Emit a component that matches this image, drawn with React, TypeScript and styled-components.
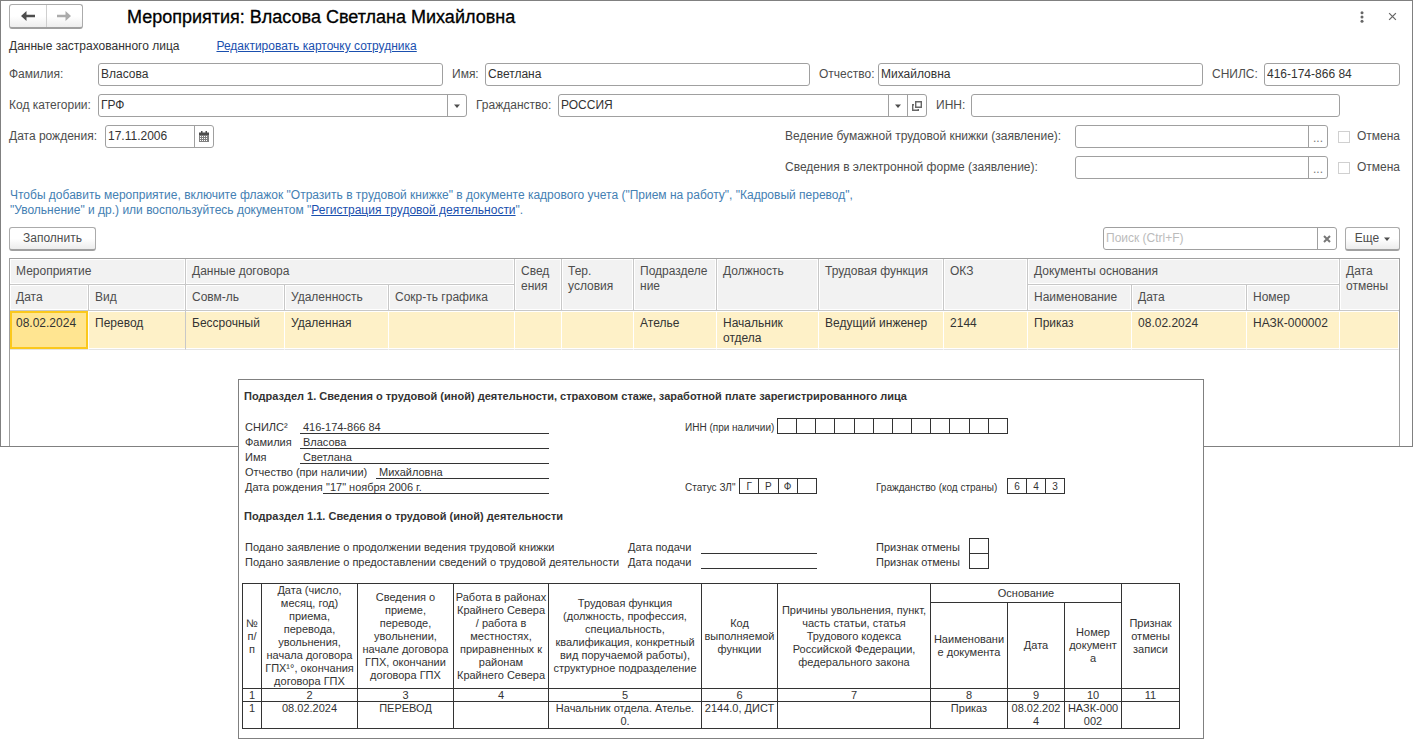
import React from "react";
import styled, { createGlobalStyle, css } from "styled-components";

const Global = createGlobalStyle`
  *, *::before, *::after { box-sizing: border-box; }
  body {
    margin: 0;
    background: #fff;
    color: #4d4d4d;
    font: 12px/15px "Liberation Sans", Arial, sans-serif;
  }
  button, input, select { font: inherit; color: inherit; }
`;

/* ---------- window ---------- */

const Window = styled.main`
  display: flex;
  flex-direction: column;
  border: 1px solid #808080;
  padding: 3px 12px 0 8px;
  background: #fff;
`;

const TitleBar = styled.header`
  display: flex;
  align-items: center;
  height: 25px;
`;

const History = styled.div`
  display: flex;
  width: 74px;
  height: 25px;
  border: 1px solid #ababab;
  border-bottom: 2px solid #a0a0a0;
  border-radius: 3px;
  background: linear-gradient(#fff 50%, #eee);
`;

const HistoryButton = styled.button<{ $muted?: boolean }>`
  flex: 1;
  display: grid;
  place-items: center;
  padding: 0;
  border: 0;
  background: none;
  color: ${(p) => (p.$muted ? "#ababab" : "#4d4d4d")};
  & + & { border-left: 1px solid #cfcfcf; }
`;

const Title = styled.h1`
  flex: 1;
  margin: 0 0 0 44px;
  font-size: 18px;
  line-height: 24px;
  font-weight: 400;
  color: #000;
  -webkit-text-stroke: 0.3px #000;
`;

const WindowTools = styled.div`
  display: flex;
  gap: 14px;
`;

const IconButton = styled.button`
  display: grid;
  place-items: center;
  width: 16px;
  height: 16px;
  padding: 0;
  border: 0;
  background: none;
  color: #666;
`;

const SubHeader = styled.div`
  display: flex;
  gap: 37px;
  padding: 10px 0 9px;
  color: #333;
`;

const Link = styled.a`
  color: #1a4fae;
`;

/* ---------- form ---------- */

const Form = styled.form`
  display: grid;
  gap: 8px;
`;

const FormRow = styled.div<{ $columns: string }>`
  display: grid;
  grid-template-columns: ${(p) => p.$columns};
  align-items: center;
`;

const Label = styled.label<{ $inner?: boolean }>`
  padding-left: ${(p) => (p.$inner ? "9px" : "0")};
  white-space: nowrap;
`;

const Box = styled.div`
  display: flex;
  height: 23px;
  min-width: 0;
  border: 1px solid #a0a0a0;
  border-radius: 3px;
  background: #fff;
  overflow: hidden;
`;

const TextInput = styled.input`
  flex: 1;
  width: 0;
  min-width: 0;
  padding: 0 2px;
  border: 0;
  outline: 0;
  background: none;
  color: #333;
  &::placeholder { color: #bbb; opacity: 1; }
`;

const Select = styled.select`
  grid-area: 1 / 1 / 2 / 3;
  appearance: none;
  padding: 0 2px;
  border: 0;
  outline: 0;
  background: none;
  color: #333;
`;

const SelectBox = styled.div`
  flex: 1;
  display: grid;
  grid-template-columns: 1fr 19px;
`;

const addOn = css`
  display: grid;
  place-items: center;
  width: 19px;
  border: 0;
  border-left: 1px solid #a0a0a0;
`;

const SelectMark = styled.span`
  ${addOn}
  grid-area: 1 / 2;
  pointer-events: none;
`;

const AddOnButton = styled.button`
  ${addOn}
  padding: 0;
  background: none;
  color: #777;
`;

const Ellipsis = styled.span`
  padding-top: 3px;
`;

const Split = styled.div`
  display: flex;
  justify-content: space-between;
  align-items: flex-start;
`;

const DateField = styled.div`
  display: grid;
  grid-template-columns: 96px 109px;
  align-items: center;
`;

const Statements = styled.div`
  display: grid;
  grid-template-columns: 290px 253px 72px;
  row-gap: 8px;
  align-items: center;
`;

const Check = styled.label`
  display: flex;
  align-items: center;
  justify-content: space-between;
  padding-left: 10px;
`;

const Checkbox = styled.input`
  appearance: none;
  width: 12px;
  height: 12px;
  margin: 0;
  border: 1px solid #d0d0d0;
  background: #fff;
`;

const Hint = styled.p`
  margin: 9px 0;
  padding-left: 1px;
  color: #4480b3;
`;

const Toolbar = styled.div`
  display: flex;
  align-items: center;
  justify-content: space-between;
  margin-bottom: 7px;
`;

const ToolGroup = styled.div`
  display: flex;
  gap: 8px;
`;

const SearchBox = styled(Box)`
  width: 234px;
`;

const Button = styled.button<{ $width: number }>`
  display: flex;
  align-items: center;
  justify-content: center;
  gap: 5px;
  width: ${(p) => p.$width}px;
  height: 24px;
  padding: 0;
  border: 1px solid #ababab;
  border-bottom: 2px solid #a0a0a0;
  border-radius: 3px;
  background: linear-gradient(#fff 50%, #ececec);
  white-space: nowrap;
`;

/* ---------- events list ---------- */

const ListFrame = styled.div`
  min-height: 188px;
  border: 1px solid #a0a0a0;
  border-bottom: 0;
`;

const List = styled.table`
  width: 100%;
  table-layout: fixed;
  border-collapse: separate;
  border-spacing: 0;
`;

const HeadCell = styled.th`
  height: 26px;
  padding: 5px 0 0 6px;
  border-right: 1px solid #c8c8c8;
  border-bottom: 1px solid #c8c8c8;
  background: #f2f2f2;
  box-shadow: inset 0 0 0 1px #fff;
  font-weight: 400;
  text-align: left;
  vertical-align: top;
  white-space: nowrap;
  &[data-last] { border-right: 0; }
`;

const DataCell = styled.td<{ $active?: boolean; $divider?: boolean }>`
  height: 39px;
  padding: 5px 0 0 6px;
  border-right: 1px solid ${(p) => (p.$divider ? "#c8c8c8" : "#fff")};
  border-bottom: 1px solid #e4e4e4;
  background: ${(p) => (p.$active ? "#ffe591" : "#fef1c8")};
  box-shadow: ${(p) => (p.$active ? "inset 0 0 0 2px #fbc81c" : "inset 0 -1px 0 #fff, inset 0 1px 0 #fff")};
  color: #333;
  vertical-align: top;
`;

/* ---------- printed form ---------- */

const Report = styled.section`
  position: relative;
  margin: -68px 209px 0 238px;
  padding: 8px 23px 9px 3px;
  border: 1px solid #808080;
  background: #fff;
  color: #333;
  font-size: 11px;
  line-height: 13px;
`;

const ReportTitle = styled.h2`
  margin: 0 0 15px;
  padding: 1px 0 0 2px;
  font-size: 11px;
  line-height: 15px;
  font-weight: 700;
  white-space: nowrap;
`;

const Lines = styled.div`
  display: grid;
  padding-left: 3px;
  margin-bottom: 14px;
`;

const Line = styled.div`
  display: grid;
  grid-template-columns: 440px 191px 1fr;
  height: 15px;
  align-items: end;
  white-space: nowrap;
`;

const StatementLine = styled(Line)`
  grid-template-columns: 383px 73px 175px 93px 20px;
`;

const Entry = styled.div<{ $label: number }>`
  display: grid;
  grid-template-columns: ${(p) => p.$label}px 1fr;
  align-items: end;
  width: 304px;
`;

const Value = styled.span`
  padding-left: 3px;
  height: 14px;
  line-height: 15px;
  border-bottom: 1px solid #333;
`;

const Blank = styled.span`
  width: 116px;
  height: 14px;
  border-bottom: 1px solid #333;
`;

const Coded = styled.div<{ $label: number }>`
  display: grid;
  grid-template-columns: ${(p) => p.$label}px max-content;
  align-items: end;
  font-size: 10px;
`;

const Cells = styled.span<{ $count: number; $width: number }>`
  display: grid;
  grid-template-columns: repeat(${(p) => p.$count}, 1fr);
  width: ${(p) => p.$width}px;
  height: 16px;
  margin-top: -1px;
  border: solid #333;
  border-width: 1px 0 1px 1px;
`;

const Cell = styled.span`
  height: 14px;
  padding-top: 1px;
  border-right: 1px solid #333;
  text-align: center;
`;

const CancelMark = styled.span`
  height: 16px;
  margin-top: -1px;
  border: 1px solid #333;
`;

const ReportTable = styled.table`
  width: 100%;
  table-layout: fixed;
  border-collapse: collapse;
  text-align: center;
  th, td {
    padding: 0;
    border: 1px solid #333;
    font-weight: 400;
    white-space: nowrap;
  }
  tbody td { vertical-align: top; }
`;

const ReportRow = styled.tr<{ $height: number }>`
  height: ${(p) => p.$height}px;
`;

const NumberRow = styled.tr`
  line-height: 12px;
`;

/* ---------- icons ---------- */

const Arrow = ({ flip }: { flip?: boolean }) => (
  <svg width="14" height="10" viewBox="0 0 14 10" aria-hidden="true">
    <g transform={flip ? "matrix(-1 0 0 1 14 0)" : undefined}>
      <path d="M0 5 5.500 0v3.8H14v2.4H5.500V10z" fill="currentColor" />
    </g>
  </svg>
);

const Caret = () => (
  <svg width="6" height="4" viewBox="0 0 6 4" aria-hidden="true">
    <path d="M0 .5h6L3 4z" fill="#4d4d4d" />
  </svg>
);

const Dots = () => (
  <svg width="4" height="12" viewBox="0 0 4 12" aria-hidden="true" fill="currentColor">
    <circle cx="2" cy="1.7" r="1.5" />
    <circle cx="2" cy="6" r="1.5" />
    <circle cx="2" cy="10.3" r="1.5" />
  </svg>
);

const Cross = ({ weight, size }: { weight: number; size: number }) => (
  <svg width={size} height={size} viewBox="0 0 8 8" aria-hidden="true">
    <path d="M1 1l6 6M7 1 1 7" stroke="currentColor" strokeWidth={weight} fill="none" />
  </svg>
);

const Calendar = () => (
  <svg width="10" height="11" viewBox="0 0 10 11" aria-hidden="true">
    <path d="M0 2.500h10V11H0z" fill="#808080" />
    <path d="M0 1.500h10V4H0z" fill="#4d4d4d" />
    <path d="M2 0h1.500v2H2zM6.500 0H8v2H6.500z" fill="#4d4d4d" />
    <path
      d="M1 5h1v1H1zM3 5h1v1H3zM5 5h1v1H5zM7 5h1v1H7zM1 7h1v1H1zM3 7h1v1H3zM5 7h1v1H5zM7 7h1v1H7zM1 9h1v1H1zM3 9h1v1H3zM5 9h1v1H5zM7 9h1v1H7z"
      fill="#fff"
    />
  </svg>
);

const OpenIcon = () => (
  <svg width="10" height="10" viewBox="0 0 10 10" aria-hidden="true" fill="none" stroke="#666" strokeWidth="1.4">
    <path d="M3.700.7h5.600v5.600H3.700z" />
    <path d="M2 3.700H.7v5.600h5.600V8" />
  </svg>
);

/* ---------- data ---------- */

const listColumns = [79, 97, 99, 104, 126, 47, 72, 83, 102, 125, 84, 104, 115, 93, 59];

const eventRow = [
  "08.02.2024", "Перевод", "Бессрочный", "Удаленная", "", "", "", "Ателье",
  "Начальник отдела", "Ведущий инженер", "2144", "Приказ", "08.02.2024", "НАЗК-000002", "",
];

const reportColumns = [19, 96, 96, 95, 153, 76, 153, 77, 57, 57, 58];

const reportHead = [
  ["№", "п/", "п"],
  ["Дата (число,", "месяц, год)", "приема,", "перевода,", "увольнения,", "начала договора", "ГПХ¹°, окончания", "договора ГПХ"],
  ["Сведения о", "приеме,", "переводе,", "увольнении,", "начале договора", "ГПХ, окончании", "договора ГПХ"],
  ["Работа в районах", "Крайнего Севера", "/ работа в", "местностях,", "приравненных к", "районам", "Крайнего Севера"],
  ["Трудовая функция", "(должность, профессия,", "специальность,", "квалификация, конкретный", "вид поручаемой работы),", "структурное подразделение"],
  ["Код", "выполняемой", "функции"],
  ["Причины увольнения, пункт,", "часть статьи, статья", "Трудового кодекса", "Российской Федерации,", "федерального закона"],
];

const reportRow = [
  ["1"], ["08.02.2024"], ["ПЕРЕВОД"], [""], ["Начальник отдела. Ателье.", "0."],
  ["2144.0, ДИСТ"], [""], ["Приказ"], ["08.02.202", "4"], ["НАЗК-000", "002"], [""],
];

const Stacked = ({ lines }: { lines: string[] }) => (
  <>
    {lines.map((line, i) => (
      <React.Fragment key={i}>
        {i > 0 && <br />}
        {line}
      </React.Fragment>
    ))}
  </>
);

const CodeCells = ({ text, count, width }: { text: string; count: number; width: number }) => (
  <Cells $count={count} $width={width}>
    {Array.from({ length: count }, (_, i) => (
      <Cell key={i}>{text[i] ?? ""}</Cell>
    ))}
  </Cells>
);

const Statement = ({ id, text }: { id: string; text: string }) => (
  <>
    <Label htmlFor={id}>{text}</Label>
    <Box>
      <TextInput id={id} />
      <AddOnButton type="button" aria-label="Выбрать"><Ellipsis>...</Ellipsis></AddOnButton>
    </Box>
    <Check>
      <Checkbox type="checkbox" />
      Отмена
    </Check>
  </>
);

export default function App() {
  return (
    <>
      <Global />
      <Window>
        <TitleBar>
          <History>
            <HistoryButton aria-label="Назад"><Arrow /></HistoryButton>
            <HistoryButton aria-label="Вперед" $muted><Arrow flip /></HistoryButton>
          </History>
          <Title>Мероприятия: Власова Светлана Михайловна</Title>
          <WindowTools>
            <IconButton aria-label="Меню"><Dots /></IconButton>
            <IconButton aria-label="Закрыть"><Cross weight={1.1} size={9} /></IconButton>
          </WindowTools>
        </TitleBar>

        <SubHeader>
          <span>Данные застрахованного лица</span>
          <Link href="#employee">Редактировать карточку сотрудника</Link>
        </SubHeader>

        <Form>
          <FormRow $columns="89px 345fr 42px 325fr 68px 325fr 61px 136px">
            <Label htmlFor="surname">Фамилия:</Label>
            <Box><TextInput id="surname" defaultValue="Власова" /></Box>
            <Label htmlFor="name" $inner>Имя:</Label>
            <Box><TextInput id="name" defaultValue="Светлана" /></Box>
            <Label htmlFor="patronymic" $inner>Отчество:</Label>
            <Box><TextInput id="patronymic" defaultValue="Михайловна" /></Box>
            <Label htmlFor="snils" $inner>СНИЛС:</Label>
            <Box><TextInput id="snils" defaultValue="416-174-866 84" /></Box>
          </FormRow>

          <FormRow $columns="89px 1fr 91px 1fr 44px 1fr 60px">
            <Label htmlFor="category">Код категории:</Label>
            <Box>
              <SelectBox>
                <Select id="category"><option>ГРФ</option></Select>
                <SelectMark><Caret /></SelectMark>
              </SelectBox>
            </Box>
            <Label htmlFor="country" $inner>Гражданство:</Label>
            <Box>
              <SelectBox>
                <Select id="country"><option>РОССИЯ</option></Select>
                <SelectMark><Caret /></SelectMark>
              </SelectBox>
              <AddOnButton type="button" aria-label="Открыть"><OpenIcon /></AddOnButton>
            </Box>
            <Label htmlFor="inn" $inner>ИНН:</Label>
            <Box><TextInput id="inn" /></Box>
          </FormRow>

          <Split>
            <DateField>
              <Label htmlFor="birth">Дата рождения:</Label>
              <Box>
                <TextInput id="birth" defaultValue="17.11.2006" />
                <AddOnButton type="button" aria-label="Календарь"><Calendar /></AddOnButton>
              </Box>
            </DateField>
            <Statements>
              <Statement id="paper" text="Ведение бумажной трудовой книжки (заявление):" />
              <Statement id="digital" text="Сведения в электронной форме (заявление):" />
            </Statements>
          </Split>
        </Form>

        <Hint>
          Чтобы добавить мероприятие, включите флажок "Отразить в трудовой книжке" в документе кадрового учета ("Прием на работу", "Кадровый перевод",
          <br />
          "Увольнение" и др.) или воспользуйтесь документом "<Link href="#registration">Регистрация трудовой деятельности</Link>".
        </Hint>

        <Toolbar>
          <Button $width={87}>Заполнить</Button>
          <ToolGroup>
            <SearchBox>
              <TextInput aria-label="Поиск" placeholder="Поиск (Ctrl+F)" />
              <AddOnButton type="button" aria-label="Очистить"><Cross weight={2} size={8} /></AddOnButton>
            </SearchBox>
            <Button $width={55}>Еще <Caret /></Button>
          </ToolGroup>
        </Toolbar>

        <ListFrame>
          <List>
            <colgroup>
              {listColumns.map((w, i) => <col key={i} width={w} />)}
            </colgroup>
            <thead>
              <tr>
                <HeadCell colSpan={2}>Мероприятие</HeadCell>
                <HeadCell colSpan={3}>Данные договора</HeadCell>
                <HeadCell rowSpan={2}>Свед<br />ения</HeadCell>
                <HeadCell rowSpan={2}>Тер.<br />условия</HeadCell>
                <HeadCell rowSpan={2}>Подразделе<br />ние</HeadCell>
                <HeadCell rowSpan={2}>Должность</HeadCell>
                <HeadCell rowSpan={2}>Трудовая функция</HeadCell>
                <HeadCell rowSpan={2}>ОКЗ</HeadCell>
                <HeadCell colSpan={3}>Документы основания</HeadCell>
                <HeadCell rowSpan={2} data-last>Дата<br />отмены</HeadCell>
              </tr>
              <tr>
                {["Дата", "Вид", "Совм-ль", "Удаленность", "Сокр-ть графика", "Наименование", "Дата", "Номер"].map((name, i) => (
                  <HeadCell key={i}>{name}</HeadCell>
                ))}
              </tr>
            </thead>
            <tbody>
              <tr>
                {eventRow.map((text, i) => (
                  <DataCell key={i} $active={i === 0} $divider={i === 1}>{text}</DataCell>
                ))}
              </tr>
            </tbody>
          </List>
        </ListFrame>
      </Window>

      <Report>
        <ReportTitle>Подраздел 1. Сведения о трудовой (иной) деятельности, страховом стаже, заработной плате зарегистрированного лица</ReportTitle>
        <Lines>
          <Line>
            <Entry $label={55}>СНИЛС² <Value>416-174-866 84</Value></Entry>
            <Coded $label={92}>ИНН (при наличии)<CodeCells text="" count={12} width={231} /></Coded>
          </Line>
          <Line><Entry $label={55}>Фамилия <Value>Власова</Value></Entry></Line>
          <Line><Entry $label={55}>Имя <Value>Светлана</Value></Entry></Line>
          <Line><Entry $label={131}>Отчество (при наличии) <Value>Михайловна</Value></Entry></Line>
          <Line>
            <Entry $label={78}>Дата рождения <Value>"17" ноября 2006 г.</Value></Entry>
            <Coded $label={54}>Статус ЗЛ"<CodeCells text="ГРФ" count={4} width={78} /></Coded>
            <Coded $label={131}>Гражданство (код страны)<CodeCells text="643" count={3} width={58} /></Coded>
          </Line>
        </Lines>

        <ReportTitle>Подраздел 1.1. Сведения о трудовой (иной) деятельности</ReportTitle>
        <Lines>
          {[
            "Подано заявление о продолжении ведения трудовой книжки",
            "Подано заявление о предоставлении сведений о трудовой деятельности",
          ].map((text) => (
            <StatementLine key={text}>
              <span>{text}</span>
              <span>Дата подачи</span>
              <Blank />
              <span>Признак отмены</span>
              <CancelMark />
            </StatementLine>
          ))}
        </Lines>

        <ReportTable>
          <colgroup>
            {reportColumns.map((w, i) => <col key={i} width={w} />)}
          </colgroup>
          <thead>
            <ReportRow $height={19}>
              {reportHead.map((lines, i) => (
                <th key={i} rowSpan={2}><Stacked lines={lines} /></th>
              ))}
              <th colSpan={3}>Основание</th>
              <th rowSpan={2}><Stacked lines={["Признак", "отмены", "записи"]} /></th>
            </ReportRow>
            <ReportRow $height={85}>
              <th><Stacked lines={["Наименовани", "е документа"]} /></th>
              <th>Дата</th>
              <th><Stacked lines={["Номер", "документ", "а"]} /></th>
            </ReportRow>
          </thead>
          <tbody>
            <NumberRow>
              {reportColumns.map((_, i) => <td key={i}>{i + 1}</td>)}
            </NumberRow>
            <ReportRow $height={26}>
              {reportRow.map((lines, i) => <td key={i}><Stacked lines={lines} /></td>)}
            </ReportRow>
          </tbody>
        </ReportTable>
      </Report>
    </>
  );
}
